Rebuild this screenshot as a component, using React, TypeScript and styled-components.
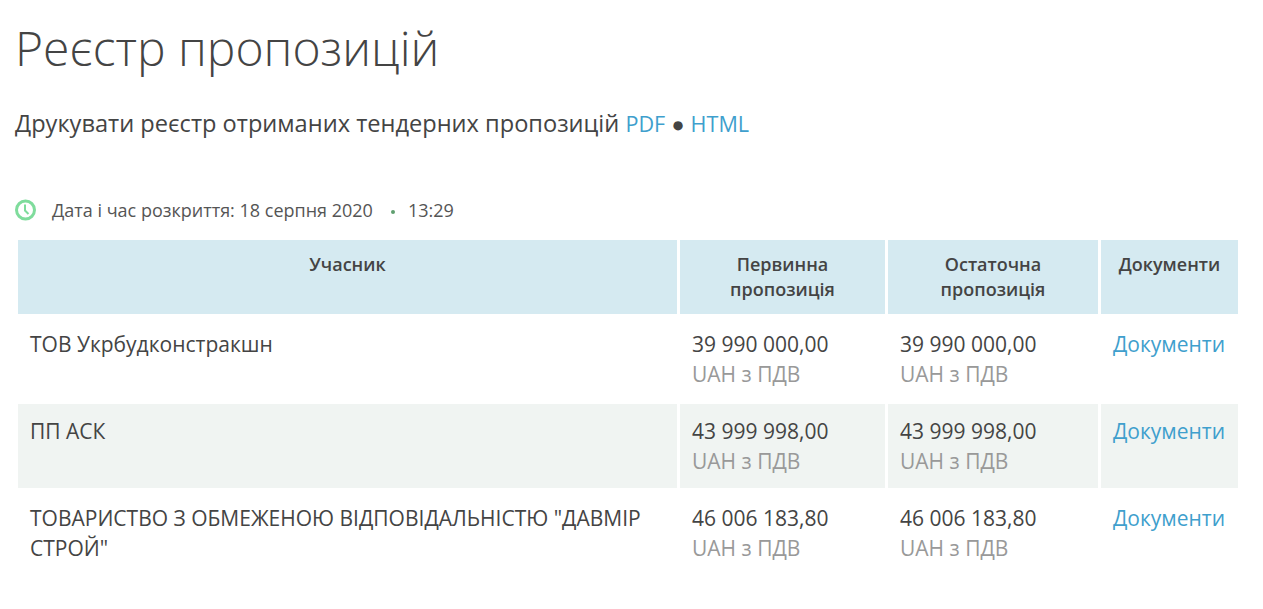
import styled, { createGlobalStyle } from 'styled-components';

const GlobalStyle = createGlobalStyle`
  html, body {
    margin: 0;
    padding: 0;
    background: #fff;
    color: #444;
    font-family: 'Open Sans', sans-serif;
  }
`;

const Page = styled.div`
  padding: 0 15px;
  height: 609px;
  overflow: hidden;
`;
const Title = styled.h1`
  margin: 0;
  padding-top: 15px;
  font-size: 48px;
  line-height: 66px;
  font-weight: 300;
  color: #444;
`;
const PrintRow = styled.p`
  margin: 27px 0 0;
  font-size: 23.6px;
  line-height: 30px;
`;
const TextLink = styled.a`
  color: #3f9fcd;
  text-decoration: none;
`;
const PrintLink = styled(TextLink)`
  font-size: 21.6px;
`;
const Bullet = styled.span`
  font-size: 21.6px;
`;
const DateRow = styled.div`
  display: flex;
  align-items: center;
  margin-top: 56px;
  height: 30px;
  font-size: 18px;
  color: #555;
`;
const ClockIcon = styled.svg`
  width: 22px;
  height: 22px;
  margin-right: 15px;
`;
const Dot = styled.span`
  width: 4px;
  height: 4px;
  border-radius: 50%;
  background: #5f9f6f;
  margin: 3px 13px 0 18px;
`;
const Table = styled.table`
  width: 1226px;
  margin-top: 12px;
  border-collapse: separate;
  border-spacing: 3px;
  table-layout: fixed;
`;
const HeadCell = styled.th<{ $width: number }>`
  width: ${p => p.$width}px;
  background: #d5eaf1;
  padding: 12px 12px 0;
  height: 74px;
  box-sizing: border-box;
  vertical-align: top;
  font-size: 18px;
  line-height: 25px;
  font-weight: 600;
  color: #444;
  text-align: center;
`;
const Row = styled.tr<{ $shaded?: boolean }>`
  background: ${p => (p.$shaded ? '#f0f4f2' : '#fff')};
`;
const Cell = styled.td`
  padding: 12px 12px 0;
  height: 84px;
  box-sizing: border-box;
  vertical-align: top;
  font-size: 21px;
  line-height: 30px;
  color: #444;
`;
const Currency = styled.div`
  color: #999;
`;

const bids = [
  { id: 0, name: 'ТОВ Укрбудконстракшн', first: '39 990 000,00', last: '39 990 000,00' },
  { id: 1, name: 'ПП АСК', first: '43 999 998,00', last: '43 999 998,00' },
  {
    id: 2,
    name: 'ТОВАРИСТВО З ОБМЕЖЕНОЮ ВІДПОВІДАЛЬНІСТЮ "ДАВМІР СТРОЙ"',
    first: '46 006 183,80',
    last: '46 006 183,80'
  }
];

export default function App() {
  return (
    <Page>
      <GlobalStyle />
      <Title>Реєстр пропозицій</Title>
      <PrintRow>
        Друкувати реєстр отриманих тендерних пропозицій <PrintLink href="#">PDF</PrintLink>{' '}
        <Bullet>●</Bullet> <PrintLink href="#">HTML</PrintLink>
      </PrintRow>
      <DateRow>
        <ClockIcon viewBox="0 0 22 22" fill="none" stroke="#7fdc9c" strokeWidth="3">
          <circle cx="10.5" cy="11" r="9" />
          <path d="M10 5.5V11.5L13.5 15" strokeWidth="2" />
        </ClockIcon>
        Дата і час розкриття: 18 серпня 2020
        <Dot />
        13:29
      </DateRow>
      <Table>
        <thead>
          <tr>
            <HeadCell $width={659}>Учасник</HeadCell>
            <HeadCell $width={205}>Первинна пропозиція</HeadCell>
            <HeadCell $width={210}>Остаточна пропозиція</HeadCell>
            <HeadCell $width={137}>Документи</HeadCell>
          </tr>
        </thead>
        <tbody>
          {bids.map(({ id, name, first, last }) => (
            <Row key={id} $shaded={id === 1}>
              <Cell>{name}</Cell>
              <Cell>
                {first}
                <Currency>UAH з ПДВ</Currency>
              </Cell>
              <Cell>
                {last}
                <Currency>UAH з ПДВ</Currency>
              </Cell>
              <Cell>
                <TextLink href="#">Документи</TextLink>
              </Cell>
            </Row>
          ))}
        </tbody>
      </Table>
    </Page>
  );
}
